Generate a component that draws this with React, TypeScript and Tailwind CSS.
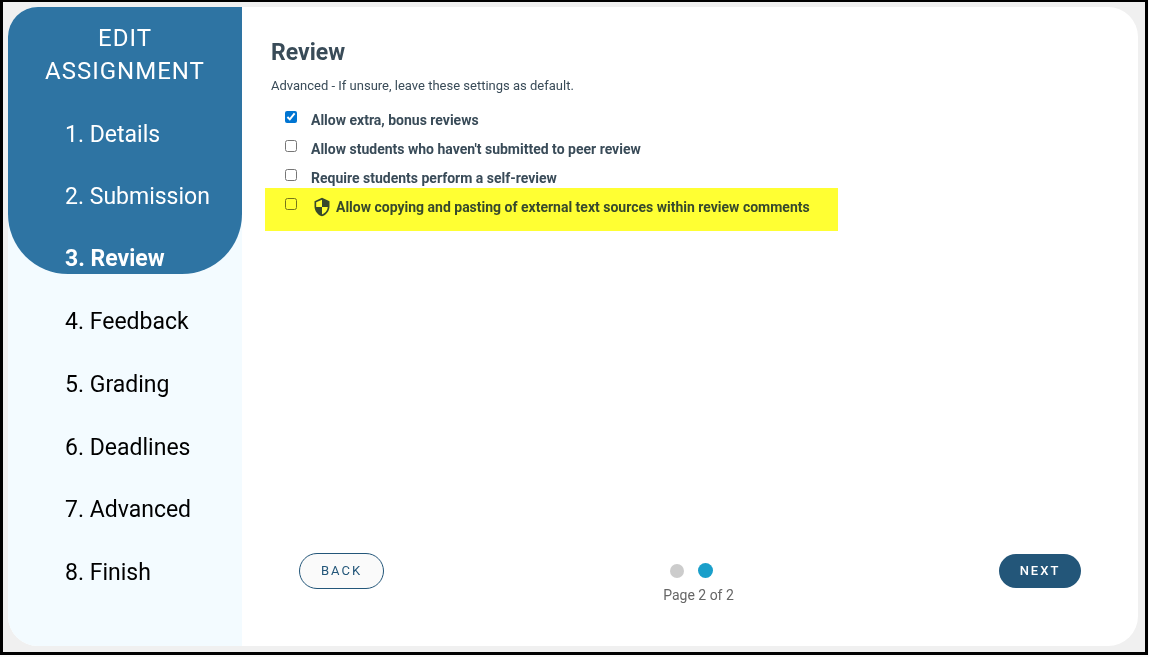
import { useState } from 'react';
import clsx from 'clsx';
import { MdSecurity } from 'react-icons/md';

const steps = [
  'Details',
  'Submission',
  'Review',
  'Feedback',
  'Grading',
  'Deadlines',
  'Advanced',
  'Finish',
];

const CURRENT = 3;

const options = [
  { id: 'bonus', label: 'Allow extra, bonus reviews' },
  { id: 'unsubmitted', label: "Allow students who haven't submitted to peer review" },
  { id: 'self', label: 'Require students perform a self-review' },
];

function StepLink({ n }: { n: number }) {
  return (
    <li>
      <a
        href="#"
        aria-current={n === CURRENT ? 'step' : undefined}
        className={clsx(
          'block pl-[57px] text-[23px] leading-[30px]',
          n <= CURRENT ? 'text-white' : 'text-black',
          n === CURRENT && 'font-bold',
        )}
      >
        {n}. {steps[n - 1]}
      </a>
    </li>
  );
}

function Sidebar() {
  return (
    <nav className="w-[234px] shrink-0 flex flex-col bg-[#f3fbff]">
      {/* Completed steps, ends right under the current one */}
      <div className="h-[267px] flex flex-col bg-[#2e74a3] rounded-b-[60px]">
        <h2 className="pt-[15px] text-center text-2xl leading-[33px] tracking-[1px] text-white uppercase">
          Edit
          <br />
          Assignment
        </h2>
        <ol className="flex-1 flex flex-col justify-between pt-8">
          {[1, 2, 3].map((n) => (
            <StepLink key={n} n={n} />
          ))}
        </ol>
      </div>
      <ol className="flex-1 flex flex-col justify-between pt-[33px] pb-[58px]">
        {[4, 5, 6, 7, 8].map((n) => (
          <StepLink key={n} n={n} />
        ))}
      </ol>
    </nav>
  );
}

export default function App() {
  const [checked, setChecked] = useState<Record<string, boolean>>({ bonus: true });

  const toggle = (id: string) => setChecked((c) => ({ ...c, [id]: !c[id] }));

  return (
    <div className="min-h-screen flex pr-px pb-[2px] bg-[#fafafa] font-['Roboto',sans-serif]">
      <div className="flex-1 flex border-[3px] border-t-2 border-black bg-[#f0f0f0] pt-[5px] pl-[5px] pr-[7px] pb-[6px]">
        <div className="flex-1 flex overflow-hidden rounded-[30px] bg-white">
          <Sidebar />

          <main className="flex-1 flex flex-col pt-[30px] pb-[41px] text-[#394b58]">
            <h1 className="pl-[29px] text-[23px] leading-8 font-bold">Review</h1>
            <p className="pl-[29px] mt-[7px] text-[13px] leading-5">
              Advanced - If unsure, leave these settings as default.
            </p>

            <div className="mt-[14px] pl-[43px]">
              {options.map((o, i) => (
                <div
                  key={o.id}
                  className={clsx('flex items-start', i < options.length - 1 ? 'h-[29px]' : 'h-5')}
                >
                  <input
                    id={o.id}
                    type="checkbox"
                    checked={!!checked[o.id]}
                    onChange={() => toggle(o.id)}
                    className="mt-px size-3 accent-[#0075d2]"
                  />
                  <label htmlFor={o.id} className="pl-[14px] text-sm leading-5 font-bold">
                    {o.label}
                  </label>
                </div>
              ))}
            </div>

            {/* Highlighted option */}
            <div className="self-start ml-[23px] h-[43px] flex items-start bg-[#ffff33] pl-5 pr-7 pt-[9px] text-[#37492c]">
              <input
                id="paste"
                type="checkbox"
                checked={!!checked.paste}
                onChange={() => toggle('paste')}
                className="mt-px size-3 mix-blend-multiply"
              />
              <label htmlFor="paste" className="pl-[15px] flex text-sm leading-5 font-bold">
                <MdSecurity className="size-5 mr-1" />
                Allow copying and pasting of external text sources within review comments
              </label>
            </div>

            <div className="mt-auto flex items-start justify-between px-[57px]">
              <button className="h-9 w-[85px] rounded-full border border-[#235679] bg-[#fafafa] text-[13px] tracking-[2px] text-[#235679]">
                BACK
              </button>
              <div className="pt-[10px] pl-[14px] text-center">
                <div className="flex justify-center items-center gap-[14px] pr-[14px]">
                  <span className="size-[14px] rounded-full bg-[#cccccc]" />
                  <span className="size-[15px] rounded-full bg-[#1a9fca]" />
                </div>
                <p className="mt-[7px] text-sm leading-5 text-[#666666]">Page 2 of 2</p>
              </div>
              <button className="mt-px h-[34px] w-[82px] rounded-full bg-[#235679] text-[13px] font-medium tracking-[2px] text-white">
                NEXT
              </button>
            </div>
          </main>
        </div>
      </div>
    </div>
  );
}
